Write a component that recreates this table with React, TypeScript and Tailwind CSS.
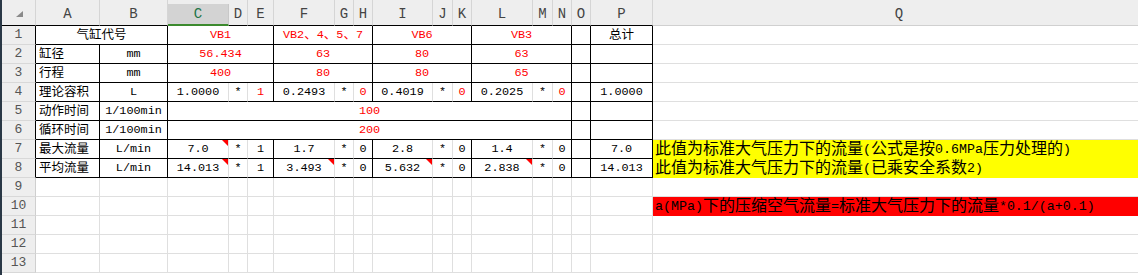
import clsx from "clsx";

type Cell = {
  t?: string;
  span?: number;
  red?: boolean;
  left?: boolean;
  thin?: boolean;
  tri?: boolean;
};

type Note = { t?: string; fill?: "y" | "r" };

const SPAN: Record<number, string> = {
  1: "",
  2: "col-span-2",
  3: "col-span-3",
  12: "col-span-12",
};

const COLS = ["A", "B", "C", "D", "E", "F", "G", "H", "I", "J", "K", "L", "M", "N", "O", "P", "Q"];

// each group of three: value, "*", factor
const triple = (v: string, f: string, red: boolean, tri = false): Cell[] => [
  { t: v, thin: true, tri },
  { t: "*", thin: true },
  { t: f, red },
];

const rows: Cell[][] = [
  [
    { t: "气缸代号", span: 2 },
    { t: "VB1", span: 3, red: true },
    { t: "VB2、4、5、7", span: 3, red: true },
    { t: "VB6", span: 3, red: true },
    { t: "VB3", span: 3, red: true },
    {},
    { t: "总计" },
  ],
  [
    { t: "缸径", left: true },
    { t: "mm" },
    { t: "56.434", span: 3, red: true },
    { t: "63", span: 3, red: true },
    { t: "80", span: 3, red: true },
    { t: "63", span: 3, red: true },
    {},
    {},
  ],
  [
    { t: "行程", left: true },
    { t: "mm" },
    { t: "400", span: 3, red: true },
    { t: "80", span: 3, red: true },
    { t: "80", span: 3, red: true },
    { t: "65", span: 3, red: true },
    {},
    {},
  ],
  [
    { t: "理论容积", left: true },
    { t: "L" },
    ...triple("1.0000", "1", true),
    ...triple("0.2493", "0", true),
    ...triple("0.4019", "0", true),
    ...triple("0.2025", "0", true),
    {},
    { t: "1.0000" },
  ],
  [
    { t: "动作时间", left: true },
    { t: "1/100min" },
    { t: "100", span: 12, red: true },
    {},
    {},
  ],
  [
    { t: "循环时间", left: true },
    { t: "1/100min" },
    { t: "200", span: 12, red: true },
    {},
    {},
  ],
  [
    { t: "最大流量", left: true },
    { t: "L/min" },
    ...triple("7.0", "1", false, true),
    ...triple("1.7", "0", false),
    ...triple("2.8", "0", false),
    ...triple("1.4", "0", false),
    {},
    { t: "7.0" },
  ],
  [
    { t: "平均流量", left: true },
    { t: "L/min" },
    ...triple("14.013", "1", false, true),
    ...triple("3.493", "0", false, true),
    ...triple("5.632", "0", false, true),
    ...triple("2.838", "0", false, true),
    {},
    { t: "14.013" },
  ],
];

const notes: Record<number, Note> = {
  7: { t: "此值为标准大气压力下的流量(公式是按0.6MPa压力处理的)", fill: "y" },
  8: { t: "此值为标准大气压力下的流量(已乘安全系数2)", fill: "y" },
  10: { t: "a(MPa)下的压缩空气流量=标准大气压力下的流量*0.1/(a+0.1)", fill: "r" },
};

// latin runs are drawn a bit smaller so they sit at half the width of a CJK glyph
function Mixed({ s, big }: { s: string; big?: boolean }) {
  const parts = s.split(/([\x20-\x7e]+)/).filter(Boolean);
  return (
    <>
      {parts.map((p, i) =>
        /^[\x20-\x7e]+$/.test(p) ? (
          <span key={i} className={big ? "text-[13.3px]" : "text-[11.8px]"}>
            {p}
          </span>
        ) : (
          <span key={i}>{p}</span>
        )
      )}
    </>
  );
}

function Comment() {
  return (
    <svg className="absolute top-0 right-0" width="6" height="6" viewBox="0 0 6 6">
      <polygon points="0,0 6,0 6,6" fill="#ff0000" />
    </svg>
  );
}

function RowHead({ n }: { n: number }) {
  return (
    <div
      className={clsx(
        "flex items-center justify-center border-r border-b border-b-[#d8d8d8] bg-[#eeeeee] text-[13px] text-[#555]",
        n >= 1 && n <= 8 ? "border-r-black" : "border-r-[#cfcfcf]"
      )}
    >
      {n}
    </div>
  );
}

function NoteCell({ note }: { note?: Note }) {
  return (
    <div
      className={clsx(
        "flex items-center overflow-hidden whitespace-nowrap border-b pl-[2px] pt-[1px] text-[16px] leading-none text-black",
        note?.fill === "y" && "bg-[#ffff00] border-b-[#ffff00]",
        note?.fill === "r" && "bg-[#ff0000] border-b-[#ff0000]",
        !note?.fill && "border-b-[#dfdfdf]"
      )}
    >
      {note?.t && <Mixed s={note.t} big />}
    </div>
  );
}

export default function App() {
  return (
    <div className="h-[275px] w-[1138px] overflow-hidden border-l-2 border-l-[#2a3846] bg-white font-['Liberation_Mono','Noto_Sans_CJK_SC',monospace]">
      <div className="grid grid-cols-[34px_64px_68px_61px_19px_26px_61px_19px_19px_60px_20px_19px_61px_20px_19px_19px_62px_492px] grid-rows-[26px_repeat(13,19px)]">
        {/* column headers */}
        <div className="flex items-end justify-end border-r border-b border-r-[#d5d5d5] border-b-black bg-[#eeeeee] pr-[12px] pb-[8px]">
          <svg width="7" height="6" viewBox="0 0 7 6">
            <polygon points="7,0 7,6 0,6" fill="#8a8a8a" />
          </svg>
        </div>
        {COLS.map((c) =>
          c === "C" ? (
            <div key={c} className="bg-[#eeeeee] pt-[4px]">
              <div className="flex h-full items-center justify-center border-r border-b-2 border-r-[#c8c8c8] border-b-[#3c8a2e] bg-[#d3d3d3] text-[14px] text-[#217346]">
                {c}
              </div>
            </div>
          ) : (
            <div
              key={c}
              className={clsx(
                "flex items-center justify-center border-b bg-[#eeeeee] pt-[4px] text-[14px] text-[#444]",
                c === "Q" ? "border-b-[#d0d0d0]" : "border-r border-r-[#d5d5d5] border-b-black"
              )}
            >
              {c}
            </div>
          )
        )}

        {/* table body */}
        {rows.map((cells, r) => [
          <RowHead key={`h${r}`} n={r + 1} />,
          ...cells.map((cell, i) => (
            <div
              key={`${r}-${i}`}
              className={clsx(
                "relative flex items-center overflow-hidden whitespace-nowrap border-r border-b border-b-black pt-[2px] text-[12.5px] leading-none",
                SPAN[cell.span ?? 1],
                cell.left ? "justify-start pl-[3px]" : "justify-center",
                cell.red ? "text-[#ff0000]" : "text-black",
                cell.thin ? "border-r-[#dfdfdf]" : "border-r-black"
              )}
            >
              {cell.t && <Mixed s={cell.t} />}
              {cell.tri && <Comment />}
            </div>
          )),
          <NoteCell key={`q${r}`} note={notes[r + 1]} />,
        ])}

        {/* empty rows below */}
        {[9, 10, 11, 12, 13].map((n) => [
          <RowHead key={`h${n}`} n={n} />,
          ...COLS.slice(0, 16).map((c) => (
            <div key={`${n}${c}`} className="border-r border-b border-r-[#dfdfdf] border-b-[#dfdfdf]" />
          )),
          <NoteCell key={`q${n}`} note={notes[n]} />,
        ])}
      </div>
    </div>
  );
}
